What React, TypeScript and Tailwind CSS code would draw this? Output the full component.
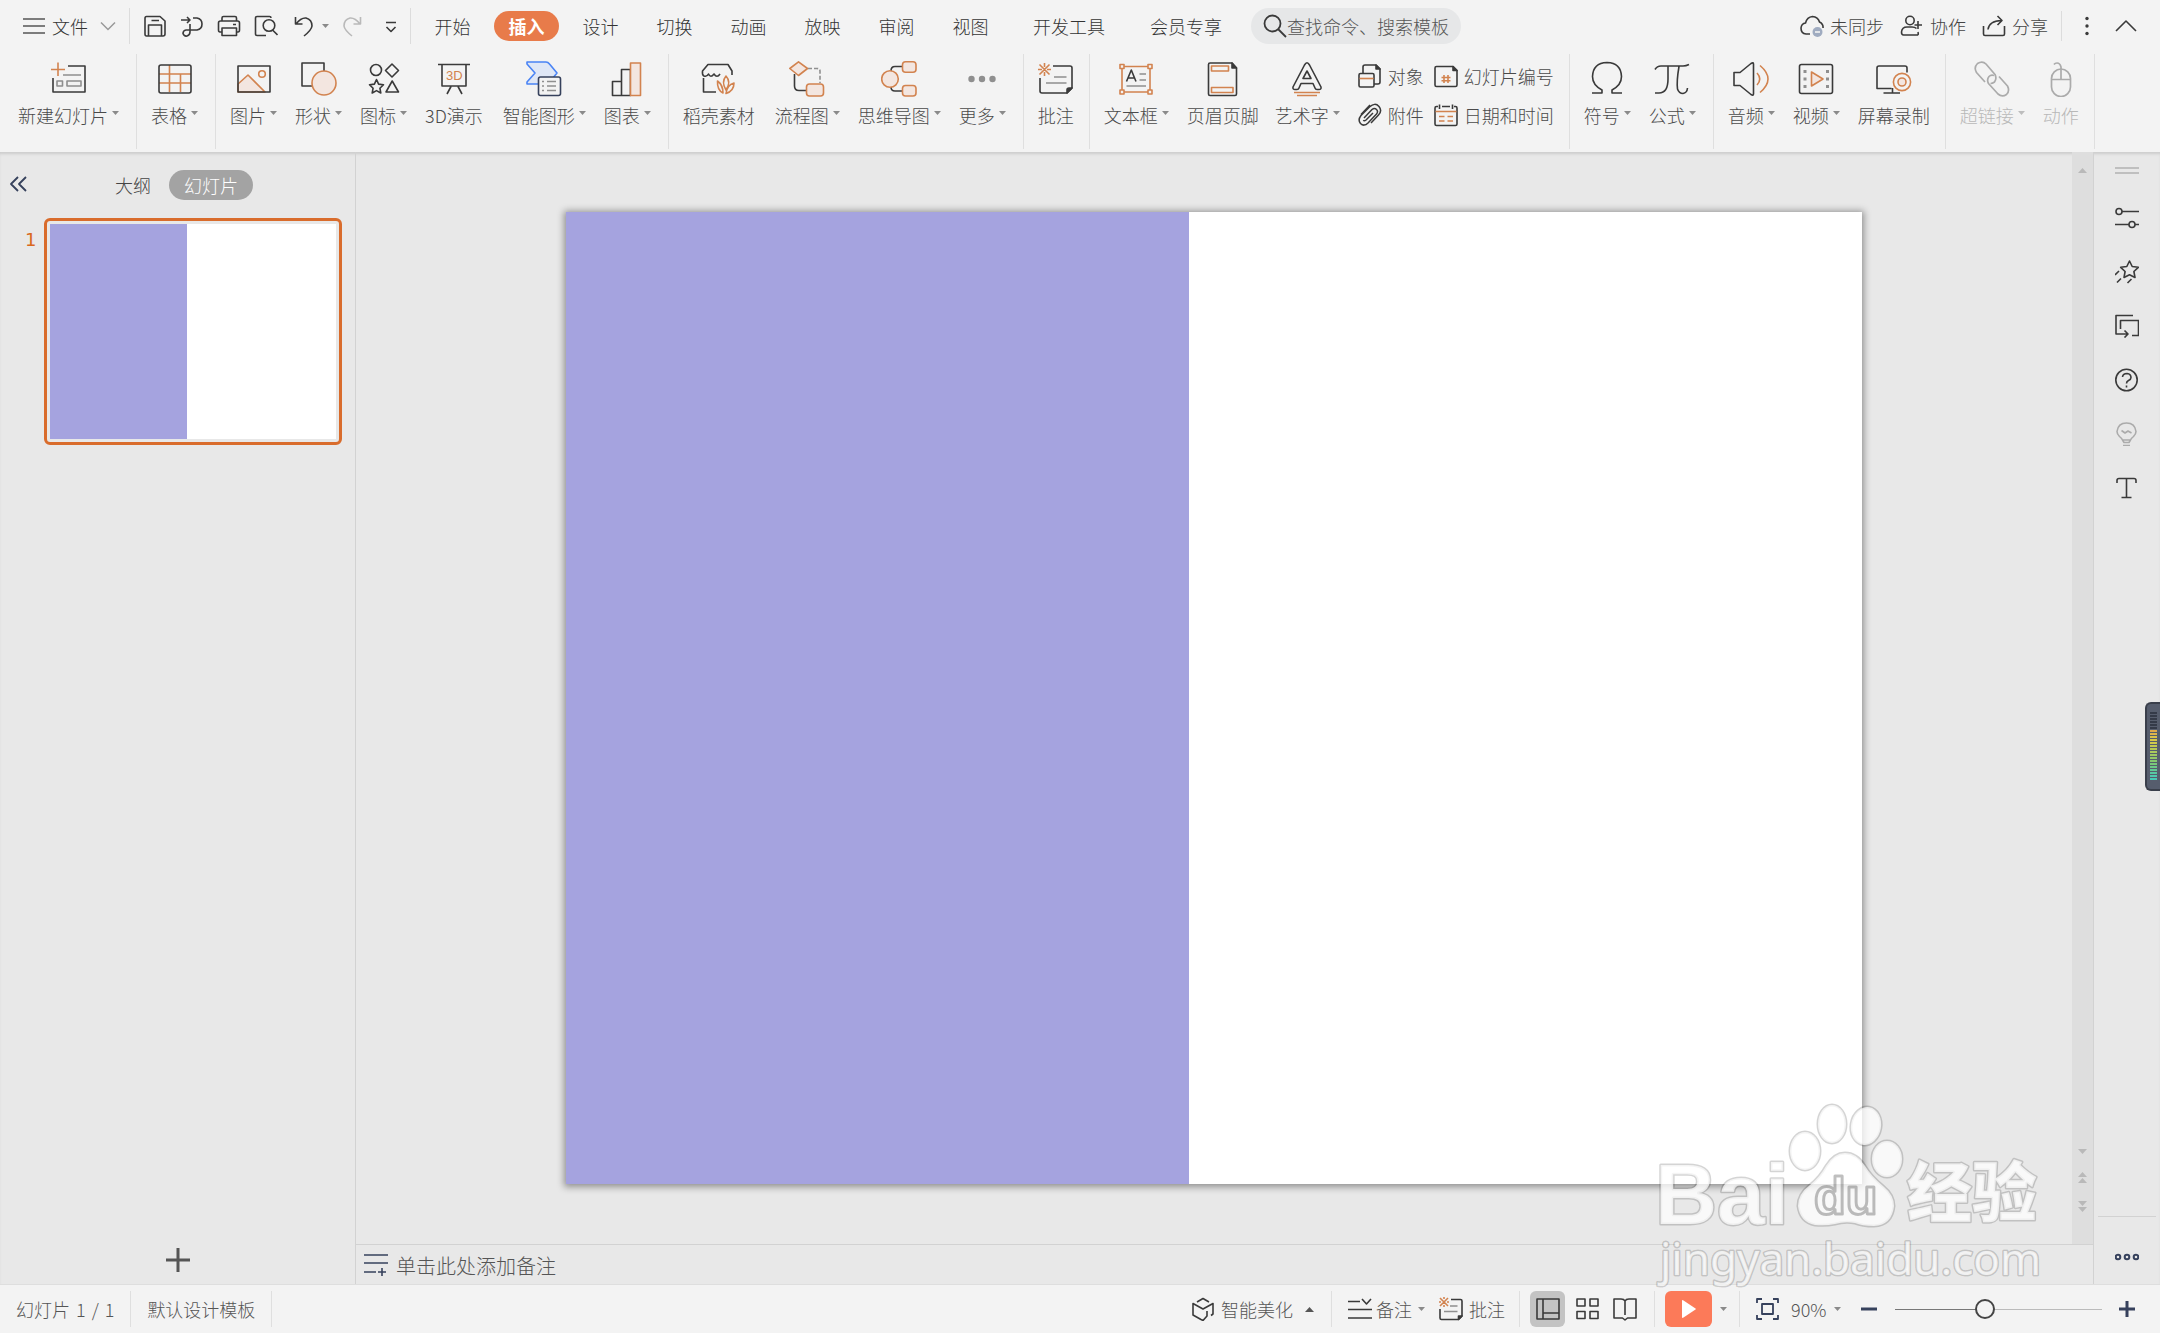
import { ReactNode, useState } from "react";
import clsx from "clsx";

const DARK = "#3a3a3a";
const ORANGE = "#d2834f";
const TINT = "#f3e6e0";
const GRAY = "#8f8f8f";
const NAVY = "#36415c";

type IconProps = {
  size?: number;
  stroke?: string;
  width?: number;
  children: ReactNode;
};

const Icon = ({ size = 24, stroke = DARK, width = 1.6, children }: IconProps) => (
  <svg
    width={size}
    height={size}
    viewBox={`0 0 ${size} ${size}`}
    fill="none"
    stroke={stroke}
    strokeWidth={width}
    strokeLinejoin="round"
    className="shrink-0"
    aria-hidden="true"
  >
    {children}
  </svg>
);

const Caret = ({ up = false, className }: { up?: boolean; className?: string }) => (
  <svg width="7" height="4" viewBox="0 0 7 4" className={clsx("shrink-0", className)} aria-hidden="true">
    <path d={up ? "M0 4L3.500 0L7 4Z" : "M0 0H7L3.500 4Z"} fill="currentColor" />
  </svg>
);

const BigCaret = ({ up = false, className }: { up?: boolean; className?: string }) => (
  <svg width="9" height="5" viewBox="0 0 9 5" className={clsx("shrink-0", className)} aria-hidden="true">
    <path d={up ? "M0 5L4.500 0L9 5Z" : "M0 0H9L4.500 5Z"} fill="currentColor" />
  </svg>
);

/* ---------- ribbon icons, 36px ---------- */

const NewSlideIcon = () => (
  <Icon size={36}>
    <path d="M0 8.5H14M7 1.5V15" stroke={ORANGE} />
    <path d="M17 5H34V31H2V17" />
    <path d="M12 14H30M6 20H11.500V25H6ZM16 20H30V25H16Z" stroke={GRAY} />
  </Icon>
);

const TableIcon = () => (
  <Icon size={36}>
    <path d="M2 13H34M2 22H34M12.500 4V31M23.500 13V31" stroke={ORANGE} />
    <rect x="2" y="4" width="32" height="28" rx="2" />
  </Icon>
);

const PictureIcon = () => (
  <Icon size={36}>
    <path d="M2 23L12 14L29 31H2Z" fill={TINT} stroke={ORANGE} />
    <circle cx="26" cy="13" r="3.300" stroke={ORANGE} />
    <rect x="2" y="5" width="32" height="26" />
  </Icon>
);

const ShapeIcon = () => (
  <Icon size={36}>
    <rect x="1" y="2" width="22" height="23" />
    <circle cx="23" cy="22" r="12" fill={TINT} stroke={ORANGE} />
  </Icon>
);

const GlyphIcon = () => (
  <Icon size={36}>
    <circle cx="10" cy="9" r="5.500" />
    <path d="M26 3L32.500 9.500L26 16L19.500 9.500Z" />
    <path d="M10.500 18.500L12.600 23.100L17.500 23.700L13.900 27.200L14.800 32L10.500 29.600L6.200 32L7.100 27.200L3.500 23.700L8.400 23.100Z" />
    <path d="M26.200 20L32.500 31H20Z" />
  </Icon>
);

const ThreeDIcon = () => (
  <Icon size={36}>
    <path d="M2 3.500H34M6 4V25H30V4M15 25.500L11 33M22 25.500L26 33" />
    <text x="10" y="19" fontSize="13" fill={ORANGE} stroke="none" fontFamily="Liberation Sans">
      3D
    </text>
  </Icon>
);

const SmartArtIcon = () => (
  <Icon size={36}>
    <path d="M1 1H20Q22 1 23.500 3L31 12L22 23H1V21L9 12L1 3Z" fill="#dfe7f6" stroke="#4a84f5" />
    <rect x="12.500" y="16" width="22" height="18.500" rx="2" fill="#f3f3f3" stroke={NAVY} />
    <path d="M16 20.500H18M21 20.500H30M16 25H18M21 25H30M16 29.500H18M21 29.500H30" stroke={GRAY} />
  </Icon>
);

const ChartIcon = () => (
  <Icon size={36}>
    <path d="M3.500 20.500H12.500V34.500H3.500ZM12.500 8.500H21.500V34.500H12.500Z" />
    <rect x="21.500" y="2" width="10" height="32.500" fill={TINT} stroke={ORANGE} />
  </Icon>
);

const StoreIcon = () => (
  <Icon size={36}>
    <path d="M2.500 17V31H15M31 14V10L27 3.500H7L1.500 10Q1 14 3 15Q6 16 7.500 13Q9.500 17.500 13 13Q16 17.500 19 13" />
    <path
      d="M25 15Q30.500 21 25 29Q20 21 25 15ZM16.500 20Q22 24 22 32Q16 29 16.500 20ZM33 22Q33 30 25 32.500Q26 24 33 22Z"
      stroke={ORANGE}
    />
  </Icon>
);

const FlowIcon = () => (
  <Icon size={36}>
    <path d="M5.500 13V25Q5.500 29.500 10 29.500H17" />
    <path d="M19 7.500H28Q31 7.500 31 10V22" stroke={GRAY} strokeDasharray="4 2" />
    <path d="M9.500 0.800L18.500 7.500L9.500 14.500L0.800 7.500Z" fill={TINT} stroke={ORANGE} />
    <rect x="17.500" y="23" width="17" height="12" rx="3" fill={TINT} stroke={ORANGE} />
  </Icon>
);

const MindMapIcon = () => (
  <Icon size={36}>
    <path d="M10 10Q10 5.500 14 5.500H21M10 26Q10 30 14 30H21" />
    <circle cx="9" cy="18" r="8.300" fill={TINT} stroke={ORANGE} />
    <rect x="21.500" y="0.800" width="13.500" height="10.500" rx="3" fill={TINT} stroke={ORANGE} />
    <rect x="21.500" y="24.500" width="13.500" height="10.500" rx="3" fill={TINT} stroke={ORANGE} />
  </Icon>
);

const MoreIcon = () => (
  <Icon size={36}>
    <g fill={GRAY} stroke="none">
      <circle cx="7.500" cy="18" r="3.200" />
      <circle cx="18" cy="18" r="3.200" />
      <circle cx="28.500" cy="18" r="3.200" />
    </g>
  </Icon>
);

const CommentIcon = () => (
  <Icon size={36}>
    <path d="M6.500 2V6M6.500 11V15M0 8.500H4M9 8.500H13M1.500 3.500L11.500 13.500M11.500 3.500L1.500 13.500" stroke={ORANGE} />
    <path d="M15 5H32Q34 5 34 7V27L29 32H4Q2 32 2 30V17" />
    <path d="M34 27H31Q29 27 29 29V32Z" fill={DARK} />
    <path d="M16 16H28.500M8 22H28.500" stroke={GRAY} />
  </Icon>
);

const TextBoxIcon = () => (
  <Icon size={36}>
    <path d="M21.500 13H28M21.500 19H28M8.500 25H28" stroke={GRAY} />
    <path d="M8.500 20.500L13.300 9L18 20.500M10 17H16.500" />
    <path
      d="M6 5.500H30M6 31H30M4 7.500V29M32 7.500V29M2 3.500H6V7.500H2ZM30 3.500H34V7.500H30ZM2 29H6V33H2ZM30 29H34V33H30Z"
      stroke={ORANGE}
    />
  </Icon>
);

const HeaderFooterIcon = () => (
  <Icon size={36}>
    <path d="M27 2H5Q3.500 2 3.500 3.500V33Q3.500 34.500 5 34.500H30Q31.500 34.500 31.500 33V7Z" />
    <path d="M27 2V7H31.500Z" fill={DARK} />
    <path d="M6.500 5H23.500V10H6.500ZM6.500 26.500H28V31.500H6.500Z" stroke={ORANGE} />
  </Icon>
);

const WordArtIcon = () => (
  <Icon size={36}>
    <path d="M15.500 4Q18 -0.500 20.500 4L32 26Q32.500 28.500 30 28.500H28Q26.500 28.500 26 27L24 22.500H12L10 27Q9.500 28.500 8 28.500H6Q3.500 28.500 4 26Z" />
    <path d="M18 10L22 17.500H14Z" />
    <path d="M5 31.500H31M8 34.500H28" stroke={ORANGE} />
  </Icon>
);

const OmegaIcon = () => (
  <Icon size={36}>
    <path d="M3 32H13V29Q3.500 24 3.500 15.500Q4 2 18 1.500Q32 2 32.500 15.500Q32.500 24 23 29V32H33" />
  </Icon>
);

const PiIcon = () => (
  <Icon size={36}>
    <path d="M1 8.500Q3 5 7 5H29Q32 5 35 3.500M14 5.500V18Q14 32 5 32H1M25 5.500Q22.500 20 23.500 28Q25 32.500 29 32.500Q33 32 33.500 27" />
  </Icon>
);

const AudioIcon = () => (
  <Icon size={36}>
    <path d="M1 11.500H7L18 2.500Q20.500 1 20.500 3V33Q20.500 35 18 33.500L7 24.500H1Z" />
    <path d="M24 12Q29.500 18 24 24M27 4.500Q43 18 27 31.500" stroke={ORANGE} />
  </Icon>
);

const VideoIcon = () => (
  <Icon size={36}>
    <rect x="1.500" y="3.500" width="33" height="29" rx="2" />
    <path d="M7 9V12M7 16.500V19.500M7 24V27M29.500 9V12M29.500 16.500V19.500M29.500 24V27" stroke={GRAY} strokeWidth="3" />
    <path d="M13.500 11V25L25 18Z" fill={TINT} stroke={ORANGE} />
  </Icon>
);

const RecordIcon = () => (
  <Icon size={36}>
    <path d="M31 11.500V7Q31 5 29 5H3Q1 5 1 7V27.500H15.500M16.500 27V32M7.500 32H24" />
    <circle cx="26" cy="21" r="8.600" stroke={ORANGE} />
    <circle cx="26" cy="21" r="4" fill={TINT} stroke={ORANGE} />
  </Icon>
);

const LinkIcon = () => (
  <Icon size={36} stroke="#ababab" width={1.700}>
    <path d="M11 21L2.500 11.500Q-0.500 6.500 3.500 2.500Q8.500 -0.500 12 3L21 13.500Q23 17.500 20.500 21Q18.500 22.500 16.500 22.500" />
    <path d="M25 15.500L33.500 25Q36 30 32.500 33.500Q28 36.500 24 33L14.500 22.500Q12.500 18.500 15 15.500Q17 13.500 20 14.500" />
  </Icon>
);

const MouseIcon = () => (
  <Icon size={36} stroke="#ababab" width={1.700}>
    <rect x="8.500" y="8" width="19" height="27.500" rx="9.500" />
    <path d="M8.500 18.500H27.500M18 18.500V6Q17 2 14 2Q12 2 11 3.500" />
  </Icon>
);

/* ---------- small icons, 24px ---------- */

const ObjectIcon = () => (
  <Icon>
    <path d="M5 9V3Q5 1 7 1H18L22 5V18Q22 20 20 20H16" />
    <path d="M18 1V5H22Z" fill={DARK} />
    <rect x="1" y="9.500" width="15" height="13.500" rx="1.500" />
    <path d="M1.500 14.500H15.500" stroke={ORANGE} />
  </Icon>
);

const AttachIcon = () => (
  <Icon width={1.500}>
    <path d="M3 11.500L12 2M6 15L14 6.500Q16.500 4.500 18.500 6.500Q20.500 8.500 18.500 11L10 20Q6 24 2.500 20.500Q-0.500 17 3 12.500L11.500 4Q17 -1 21 3.500Q24.500 8 20.500 12L13 20M15 10L8 17Q6 18.500 5.500 17" />
  </Icon>
);

const SlideNumberIcon = () => (
  <Icon>
    <path d="M19 2.500H2.500Q1 2.500 1 4V21Q1 22.500 2.500 22.500H21.500Q23 22.500 23 21V6.500Z" />
    <path d="M19 2.500V6.500H23Z" fill={DARK} />
    <path d="M10 11V19M14 11V19M7.500 13.500H16.500M7.500 16.800H16.500" stroke={ORANGE} />
  </Icon>
);

const DateIcon = () => (
  <Icon>
    <path d="M4 3.500H2.500Q1 3.500 1 5V21Q1 22.500 2.500 22.500H21.500Q23 22.500 23 21V5Q23 3.500 21.500 3.500H20M5.500 1.500V6M18.500 1.500V6M8 3.500H16" />
    <path d="M1.500 8.500H22.500M5 13.500H10.500M13.500 13.500H19M5 18H10.500M13.500 18H19" stroke={ORANGE} />
  </Icon>
);

const SaveIcon = () => (
  <Icon>
    <path d="M3.500 2.500H17L22 7V20Q22 22 20 22H3.500Q2 22 2 20V4.500Q2 2.500 3.500 2.500ZM5.500 22V11H18.500V22M8.500 6.500H16" />
  </Icon>
);

const ExportIcon = () => (
  <Icon>
    <path d="M1 6H10M7 3L10 6L7 9M13 4H17Q22 5 22 10Q22 15 17 16H6Q3 16.500 3 19.500Q4 22.500 7 22Q10 21 10 18V10" />
  </Icon>
);

const PrintIcon = () => (
  <Icon>
    <path d="M5 7V4Q5 2.500 6.500 2.500H18Q19.500 2.500 19.500 4V7M5 18H3Q1.500 18 1.500 16V9Q1.500 7 3.500 7H20.500Q22.500 7 22.500 9V16Q22.500 18 21 18H19.500M5 14H19.500V21.500H5ZM16 10.500H19" />
  </Icon>
);

const PreviewIcon = () => (
  <Icon>
    <path d="M17 4Q17 2.500 15.500 2.500H3Q1.500 2.500 1.500 4V20Q1.500 21.500 3 21.500H12M18.500 16L23.500 21" />
    <circle cx="15" cy="11.500" r="5.800" />
  </Icon>
);

const CloudIcon = () => (
  <Icon>
    <path d="M10 20H6Q1 19.500 1 14Q1.500 9.500 5.500 9Q7 3 12.500 2.500Q18 3 19.500 8Q23.500 10 23 14" />
    <circle cx="17.500" cy="18" r="5" fill="#9fabc0" stroke="none" />
    <path d="M15 18H20" stroke="#f3f3f3" />
  </Icon>
);

const CollabIcon = () => (
  <Icon>
    <circle cx="10" cy="6.500" r="4.200" />
    <path d="M18 21H3.500Q1.500 21 1.500 18Q2 13 7 13H12Q15 13 16.500 14.500M18 21Q18.500 20 18 18M18 7V15M14.500 11H22" />
  </Icon>
);

const ShareIcon = () => (
  <Icon>
    <path d="M1.500 12V20Q1.500 21.500 3 21.500H21Q22.500 21.500 22.500 20V12M6 15.500Q7 7 19.500 6.500M15.500 2L20 6.500L15.500 11" />
  </Icon>
);

/* ---------- layout data ---------- */

type RibbonItemData = {
  label: string;
  icon: ReactNode;
  menu?: boolean;
  wide?: boolean;
  disabled?: boolean;
};

const slideGroup: RibbonItemData[] = [{ label: "新建幻灯片", icon: <NewSlideIcon />, menu: true }];
const tableGroup: RibbonItemData[] = [{ label: "表格", icon: <TableIcon />, menu: true }];
const pictureGroup: RibbonItemData[] = [
  { label: "图片", icon: <PictureIcon />, menu: true },
  { label: "形状", icon: <ShapeIcon />, menu: true },
  { label: "图标", icon: <GlyphIcon />, menu: true },
  { label: "3D演示", icon: <ThreeDIcon />, wide: true },
  { label: "智能图形", icon: <SmartArtIcon />, menu: true },
  { label: "图表", icon: <ChartIcon />, menu: true },
];
const resourceGroup: RibbonItemData[] = [
  { label: "稻壳素材", icon: <StoreIcon />, wide: true },
  { label: "流程图", icon: <FlowIcon />, menu: true },
  { label: "思维导图", icon: <MindMapIcon />, menu: true },
  { label: "更多", icon: <MoreIcon />, menu: true },
];
const commentGroup: RibbonItemData[] = [{ label: "批注", icon: <CommentIcon /> }];
const textGroup: RibbonItemData[] = [
  { label: "文本框", icon: <TextBoxIcon />, menu: true },
  { label: "页眉页脚", icon: <HeaderFooterIcon /> },
  { label: "艺术字", icon: <WordArtIcon />, menu: true },
];
const symbolGroup: RibbonItemData[] = [
  { label: "符号", icon: <OmegaIcon />, menu: true },
  { label: "公式", icon: <PiIcon />, menu: true },
];
const mediaGroup: RibbonItemData[] = [
  { label: "音频", icon: <AudioIcon />, menu: true },
  { label: "视频", icon: <VideoIcon />, menu: true },
  { label: "屏幕录制", icon: <RecordIcon /> },
];
const linkGroup: RibbonItemData[] = [
  { label: "超链接", icon: <LinkIcon />, menu: true, disabled: true },
  { label: "动作", icon: <MouseIcon />, disabled: true },
];

const tabs = ["开始", "插入", "设计", "切换", "动画", "放映", "审阅", "视图"];

const RibbonItem = ({ label, icon, menu, wide, disabled }: RibbonItemData) => (
  <button
    type="button"
    disabled={disabled}
    className={clsx(
      "flex flex-col items-center gap-1.5",
      menu && "pr-0.5",
      wide && "pr-1",
      disabled ? "text-[#b8b8b8]" : "text-[#4a4a4a]"
    )}
  >
    {icon}
    <span className="flex items-center gap-1 leading-6 whitespace-nowrap">
      {label}
      {menu && <Caret className={clsx("mb-1", disabled ? "text-[#bdbdbd]" : "text-[#8a8a8a]")} />}
    </span>
  </button>
);

const RibbonGroup = ({ items, children }: { items: RibbonItemData[]; children?: ReactNode }) => (
  <div className="flex items-start gap-4 border-r border-[#dfdfdf] pt-[7px] pr-[15px] pl-[14px]">
    {items.map((item) => (
      <RibbonItem key={item.label} {...item} />
    ))}
    {children}
  </div>
);

const SmallItem = ({ label, icon }: { label: string; icon: ReactNode }) => (
  <button type="button" className="flex items-center gap-1.5 leading-6 whitespace-nowrap text-[#4a4a4a]">
    {icon}
    {label}
  </button>
);

const TitleBar = () => (
  <header className="flex h-[54px] shrink-0 items-center px-[22px] pb-0.5 text-[#333]">
    <button type="button" className="flex items-center gap-1.5">
      <Icon stroke="#555">
        <path d="M1 5H23M1 12H23M1 19H23" />
      </Icon>
      文件
    </button>
    <button type="button" aria-label="文件菜单" className="ml-3">
      <svg width="16" height="10" viewBox="0 0 16 10" fill="none" stroke="#999" strokeWidth="1.500">
        <path d="M1 1.500L8 8.500L15 1.500" />
      </svg>
    </button>
    <span className="ml-[13px] h-9 w-px bg-[#dcdcdc]" />
    <div className="ml-[13px] flex items-center gap-[13px]">
      <button type="button" aria-label="保存"><SaveIcon /></button>
      <button type="button" aria-label="输出为PDF"><ExportIcon /></button>
      <button type="button" aria-label="打印"><PrintIcon /></button>
      <button type="button" aria-label="打印预览"><PreviewIcon /></button>
    </div>
    <button type="button" aria-label="撤销" className="ml-4 flex items-center gap-1 text-[#8a8a8a]">
      <Icon>
        <path d="M1.500 3V10H8.500M2 10Q7 3.500 12 4Q18 5.500 18 12Q17.500 16 10 22" />
      </Icon>
      <Caret />
    </button>
    <button type="button" aria-label="恢复" className="ml-[11px]">
      <Icon stroke="#b9b9b9">
        <path d="M20.500 3V10H13.500M20 10Q15 3.500 10 4Q4 5.500 4 12Q4.500 16 12 22" />
      </Icon>
    </button>
    <button type="button" aria-label="自定义快速访问工具栏" className="ml-[15px]">
      <Icon>
        <path d="M7 8.500H17M7.500 13L12 17.500L16.500 13" />
      </Icon>
    </button>
    <span className="ml-[7px] h-9 w-px bg-[#dcdcdc]" />

    <nav className="ml-[9px] flex items-center gap-[9px]">
      {tabs.map((tab) => (
        <button
          key={tab}
          type="button"
          className={clsx(
            "h-[30px] w-[65px] rounded-full whitespace-nowrap",
            tab === "插入" && "bg-[#e87b4a] font-bold text-white"
          )}
        >
          {tab}
        </button>
      ))}
      <button type="button" className="ml-[21px] whitespace-nowrap">开发工具</button>
      <button type="button" className="ml-9 whitespace-nowrap">会员专享</button>
    </nav>

    <label className="ml-[29px] flex h-9 w-[210px] shrink-0 items-center rounded-full bg-[#e6e7e8] pl-3">
      <Icon width={1.800}>
        <circle cx="9.500" cy="9.500" r="8" />
        <path d="M15 15L23 23" />
      </Icon>
      <input
        type="text"
        aria-label="搜索"
        placeholder="查找命令、搜索模板"
        className="w-[170px] bg-transparent outline-none placeholder:text-[#555]"
      />
    </label>

    <div className="ml-auto flex items-center gap-4 text-[#444]">
      <button type="button" className="flex items-center gap-1.5 whitespace-nowrap"><CloudIcon />未同步</button>
      <button type="button" className="flex items-center gap-1.5 whitespace-nowrap"><CollabIcon />协作</button>
      <button type="button" className="flex items-center gap-1.5 whitespace-nowrap"><ShareIcon />分享</button>
    </div>
    <span className="ml-[13px] h-[30px] w-px bg-[#dcdcdc]" />
    <button type="button" aria-label="更多选项" className="ml-[13px]">
      <Icon>
        <g fill={DARK} stroke="none">
          <circle cx="12" cy="4.500" r="1.700" />
          <circle cx="12" cy="12" r="1.700" />
          <circle cx="12" cy="19.500" r="1.700" />
        </g>
      </Icon>
    </button>
    <button type="button" aria-label="收起功能区" className="ml-[15px]">
      <Icon>
        <path d="M2 17L12 7L22 17" />
      </Icon>
    </button>
  </header>
);

const Ribbon = () => (
  <div className="flex h-[98px] shrink-0 pb-[3px] pl-1">
    <RibbonGroup items={slideGroup} />
    <RibbonGroup items={tableGroup} />
    <RibbonGroup items={pictureGroup} />
    <RibbonGroup items={resourceGroup} />
    <RibbonGroup items={commentGroup} />
    <RibbonGroup items={textGroup}>
      <div className="grid grid-cols-[auto_auto] gap-x-2.5 gap-y-[15px] pt-[3px]">
        <SmallItem label="对象" icon={<ObjectIcon />} />
        <SmallItem label="幻灯片编号" icon={<SlideNumberIcon />} />
        <SmallItem label="附件" icon={<AttachIcon />} />
        <SmallItem label="日期和时间" icon={<DateIcon />} />
      </div>
    </RibbonGroup>
    <RibbonGroup items={symbolGroup} />
    <RibbonGroup items={mediaGroup} />
    <RibbonGroup items={linkGroup} />
  </div>
);

const SlidePanel = () => (
  <aside className="flex w-[356px] shrink-0 flex-col border-r border-[#d2d2d2]">
    <div className="mt-[18px] flex h-[30px] items-center pl-[7px]">
      <button type="button" aria-label="收起面板">
        <Icon stroke={NAVY} width={1.800}>
          <path d="M11 4L4 11L11 18M19 4L12 11L19 18" />
        </Icon>
      </button>
      <button type="button" className="ml-[84px] text-[#444]">大纲</button>
      <button type="button" className="ml-[18px] h-[30px] w-[84px] rounded-full bg-[#a3a3a3] text-white">幻灯片</button>
    </div>
    <div className="mt-[18px] flex pr-[13px]">
      <span className="w-11 pt-[10px] pl-[25px] font-['DejaVu_Sans'] font-normal text-[#d9681d]">1</span>
      <button type="button" aria-label="第 1 张幻灯片" className="flex-1 rounded-md border-3 border-[#d96c2c] p-[3px]">
        <span className="block aspect-[4/3] w-full bg-white">
          <span className="block h-full w-[48%] bg-[#a5a3df]" />
        </span>
      </button>
    </div>
    <button type="button" aria-label="新建幻灯片" className="mt-auto mb-3 self-center">
      <Icon stroke="#555" width={3}>
        <path d="M0 12H24M12 0V24" />
      </Icon>
    </button>
  </aside>
);

const Workspace = () => (
  <main className="flex min-w-0 flex-1 flex-col">
    <div className="flex min-h-0 flex-1">
      <div className="flex min-w-0 flex-1 items-center justify-center">
        <div className="aspect-[4/3] w-[75.5%] bg-white shadow-[0_1px_7px_2px_rgba(0,0,0,0.38)]">
          <div className="h-full w-[48.1%] bg-[#a5a3df]" />
        </div>
      </div>
      <div className="flex w-[21px] shrink-0 flex-col items-center bg-[#dedede] text-[#b9b9b9]">
        <BigCaret up className="mt-4" />
        <div className="mt-auto mb-8 flex flex-col items-center">
          <BigCaret />
          <BigCaret up className="mt-[18px]" />
          <BigCaret up className="mt-px" />
          <BigCaret className="mt-[18px]" />
          <BigCaret className="mt-px" />
        </div>
      </div>
    </div>
    <label className="flex h-10 shrink-0 items-center gap-2 border-t border-[#d2d2d2] pb-px pl-2">
      <Icon stroke={NAVY}>
        <path d="M0 3H24M0 11H24M0 20H12M14 20H22M18 16V24" />
      </Icon>
      <input
        type="text"
        aria-label="备注"
        placeholder="单击此处添加备注"
        className="flex-1 bg-transparent pt-1 text-[20px] leading-7 outline-none placeholder:text-[#555]"
      />
    </label>
  </main>
);

const SideTools = () => (
  <aside className="flex w-[67px] shrink-0 flex-col items-center border-l border-[#d2d2d2] pt-[7px]">
    <Icon stroke="#bfbfbf" width={2}>
      <path d="M0 9H24M0 14H24" />
    </Icon>
    <div className="mt-[23px] flex flex-col gap-[30px]">
      <button type="button" aria-label="对象属性">
        <Icon>
          <circle cx="4" cy="5.500" r="3" />
          <circle cx="17" cy="18.500" r="3" />
          <path d="M7 5.500H24M0 18.500H14M20 18.500H24" />
        </Icon>
      </button>
      <button type="button" aria-label="动画">
        <Icon>
          <path d="M14.500 1L17.200 6.500L23.300 7.300L18.900 11.500L20 17.500L14.500 14.700L9 17.500L10.100 11.500L5.700 7.300L11.800 6.500ZM0 15L4 11M2 22.500L6 18.500M12.500 23L16.500 19" />
        </Icon>
      </button>
      <button type="button" aria-label="幻灯片切换">
        <Icon>
          <path d="M18 1.500H1V20H12M9.500 16.500L13 20L9.500 23.500M5.500 15V6.500H23.500V21.500H17" />
        </Icon>
      </button>
      <button type="button" aria-label="帮助">
        <Icon>
          <circle cx="11.500" cy="12" r="10.700" />
          <path d="M7.500 9Q8 5.500 12 5.500Q16 6 16 9.500Q16 11.500 13.500 12.500Q11.500 13.500 11.500 15.500M11.500 17.500V19.500" />
        </Icon>
      </button>
      <button type="button" aria-label="灵感">
        <Icon stroke="#ababab">
          <path d="M7.500 18Q7 16.500 4.500 14.500Q2 12 2 9.500Q3 1 11.500 1Q20 1 21 9.500Q21 12 18.500 14.500Q16 16.500 15.500 18ZM7.500 18L9 20.500H14L15.500 18M8 23.500H15M6.500 8.500L10 11L13 9L16.500 11" />
        </Icon>
      </button>
      <button type="button" aria-label="文本">
        <Icon>
          <path d="M2 7V4.500Q2 2.500 4 2.500H19Q21 2.500 21 4.500V7M11.500 2.500V21.500M6.500 21.500H16.500" />
        </Icon>
      </button>
    </div>
    <div className="mt-auto flex h-[68px] w-[58px] items-start justify-center border-t border-[#d2d2d2] pt-7">
      <button type="button" aria-label="更多工具">
        <Icon stroke={NAVY} width={2}>
          <circle cx="3" cy="12" r="2.300" />
          <circle cx="12" cy="12" r="2.300" />
          <circle cx="21" cy="12" r="2.300" />
        </Icon>
      </button>
    </div>
  </aside>
);

const meterColors = [
  "#343a48", "#343a48", "#343a48", "#343a48", "#343a48", "#343a48", "#e0a94b", "#e0b54b",
  "#dcc24a", "#d6c84a", "#cfcb4c", "#c3ca50", "#b5c956", "#aac95c", "#9fc862", "#93c868",
  "#86c870", "#7ac97a", "#6dc987", "#62c995", "#58c9a2", "#50c9ad", "#49c9b5",
];

const LevelMeter = () => (
  <div className="absolute top-[702px] right-0 flex h-[89px] w-[15px] flex-col items-center gap-px rounded-l-md border-2 border-r-0 border-[#3a3f4b] bg-[#565d6d] pt-2">
    {meterColors.map((color, i) => (
      <span key={i} className="h-[2px] w-[7px]" style={{ backgroundColor: color }} />
    ))}
  </div>
);

const Divider = ({ className }: { className?: string }) => (
  <span className={clsx("h-9 w-px shrink-0 bg-[#dfdfdf]", className)} />
);

const StatusBar = () => {
  const [zoom, setZoom] = useState(43);

  return (
    <footer className="flex h-[49px] shrink-0 items-center border-t border-[#dedede] bg-[#f3f3f3] pr-5 pl-4 whitespace-nowrap text-[#555]">
      <span className="flex gap-1.5">
        幻灯片<span>1</span>
        <span>/</span>
        <span>1</span>
      </span>
      <Divider className="ml-4" />
      <span className="ml-4">默认设计模板</span>
      <Divider className="ml-4" />

      <button type="button" className="ml-auto flex items-center gap-1.5">
        <Icon>
          <path d="M6 5L12 1.500L18 5M10 22.500L2 18V6.500L12 12L22 6.500V17L20 18.500M16 14V19L12 23.500L9 22" />
        </Icon>
        智能美化
        <BigCaret up className="ml-1.5 text-[#555]" />
      </button>
      <Divider className="ml-[17px]" />
      <button type="button" className="ml-4 flex items-center">
        <Icon>
          <path d="M0 4.500H12M14 2L18.500 7L23 2M0 12.500H24M0 21H24" />
        </Icon>
        <span className="ml-1">备注</span>
        <Caret className="ml-1.5 text-[#8a8a8a]" />
      </button>
      <button type="button" className="ml-3.5 flex items-center gap-1.5">
        <Icon>
          <path d="M1 1L9 9M9 1L1 9M5 0V2M5 8V10M0 5H2M8 5H10" stroke={ORANGE} />
          <path d="M12 2.500H21.500Q23 2.500 23 4V19L19.500 22.500H2.500Q1 22.500 1 21V12" />
          <path d="M23 19H19.500V22.500Z" fill={DARK} />
          <path d="M11 9H18.500M5 14.500H18.500" stroke={GRAY} />
        </Icon>
        批注
      </button>
      <Divider className="ml-3.5" />
      <button type="button" aria-label="普通视图" className="ml-2.5 flex h-9 w-[35px] items-center justify-center rounded-md bg-[#c3c3c3]">
        <Icon>
          <path d="M1 2H23V22H1ZM7 2V22M7 16H23" />
        </Icon>
      </button>
      <button type="button" aria-label="幻灯片浏览" className="ml-2.5">
        <Icon>
          <path d="M2 2H10V9H2ZM15 2H23V9H15ZM2 14.500H10V21.500H2ZM15 14.500H23V21.500H15Z" />
        </Icon>
      </button>
      <button type="button" aria-label="阅读视图" className="ml-3.5">
        <Icon>
          <path d="M12 4Q11 2 8 2H1V21H9.500L12 23L14.500 21H23V2H16Q13 2 12 4V18" />
        </Icon>
      </button>
      <Divider className="ml-[17px]" />
      <button type="button" aria-label="播放" className="ml-2.5 flex h-9 w-[47px] items-center justify-center rounded-md bg-[#fc7a59]">
        <svg width="14" height="18" viewBox="0 0 14 18" fill="#fff" aria-hidden="true">
          <path d="M0 1Q0 -0.500 1.500 0.500L13.500 8.500Q14.300 9 13.500 9.500L1.500 17.500Q0 18.500 0 17Z" />
        </svg>
      </button>
      <button type="button" aria-label="播放选项" className="ml-2 text-[#8a8a8a]">
        <Caret />
      </button>
      <Divider className="ml-3" />
      <button type="button" aria-label="最佳显示比例" className="ml-4">
        <Icon stroke={NAVY} width={1.800}>
          <path d="M1 6V2H6M17 2H22V6M22 18V22H17M6 22H1V18M6 7H17V17H6Z" />
        </Icon>
      </button>
      <label className="ml-[11px] flex items-center gap-[7px]">
        <select aria-label="显示比例" className="appearance-none bg-transparent outline-none" defaultValue="90%">
          <option>90%</option>
        </select>
        <Caret className="text-[#8a8a8a]" />
      </label>
      <button type="button" aria-label="缩小" className="ml-4">
        <Icon stroke={NAVY} width={3}>
          <path d="M4 12H20" />
        </Icon>
      </button>
      <input
        type="range"
        aria-label="缩放"
        min={0}
        max={100}
        value={zoom}
        onChange={(e) => setZoom(Number(e.target.value))}
        className="ml-3.5 h-5 w-[207px] appearance-none bg-[linear-gradient(90deg,#777_45%,#bbb_45%)] bg-[length:100%_1px] bg-center bg-no-repeat [&::-webkit-slider-thumb]:size-5 [&::-webkit-slider-thumb]:appearance-none [&::-webkit-slider-thumb]:rounded-full [&::-webkit-slider-thumb]:border-2 [&::-webkit-slider-thumb]:border-[#444] [&::-webkit-slider-thumb]:bg-[#f3f3f3]"
      />
      <button type="button" aria-label="放大" className="ml-3.5">
        <Icon stroke={NAVY} width={3}>
          <path d="M3 12H19M11 4V20" />
        </Icon>
      </button>
    </footer>
  );
};

const Watermark = () => (
  <svg
    width="420"
    height="195"
    viewBox="0 0 420 195"
    className="pointer-events-none absolute right-[100px] bottom-[42px]"
    fill="#fff"
    fillOpacity="0.750"
    stroke="#000"
    strokeOpacity="0.170"
    strokeWidth="3"
    strokeLinejoin="round"
    paintOrder="stroke"
  >
    <text x="15" y="128" fontSize="86" fontWeight="700" fontFamily="Liberation Sans">
      Bai
    </text>
    <ellipse cx="165" cy="55" rx="15" ry="19" />
    <ellipse cx="192" cy="28" rx="14" ry="19" />
    <ellipse cx="226" cy="30" rx="15" ry="19" transform="rotate(10 226 30)" />
    <ellipse cx="247" cy="63" rx="15" ry="18" />
    <path d="M205 57Q217 57 225 70Q231 80 243 90Q254 99 254 110Q252 129 234 130Q222 130 215 127Q205 125 195 128Q186 130 175 129Q160 126 158 110Q158 98 170 89Q180 81 186 70Q194 57 205 57Z" />
    <text
      x="174"
      y="118"
      fontSize="52"
      fontWeight="700"
      fontFamily="Liberation Sans"
      fill="none"
      strokeOpacity="0.250"
    >
      du
    </text>
    <text x="267" y="120" fontSize="65" fontWeight="900" fontFamily="Noto Sans CJK SC">
      经验
    </text>
    <text x="20" y="179" fontSize="44" fontWeight="400" fontFamily="Noto Sans">
      jingyan.baidu.com
    </text>
  </svg>
);

export default function App() {
  return (
    <div className="relative flex h-screen flex-col overflow-hidden bg-[#f3f3f3] font-['Noto_Sans_CJK_SC',sans-serif] text-[18px] leading-6 font-light">
      <TitleBar />
      <Ribbon />
      <div className="flex min-h-0 flex-1 bg-[#e8e8e8] shadow-[inset_0_3px_3px_-1px_rgba(0,0,0,0.12)]">
        <SlidePanel />
        <Workspace />
        <SideTools />
      </div>
      <StatusBar />
      <LevelMeter />
      <Watermark />
    </div>
  );
}
